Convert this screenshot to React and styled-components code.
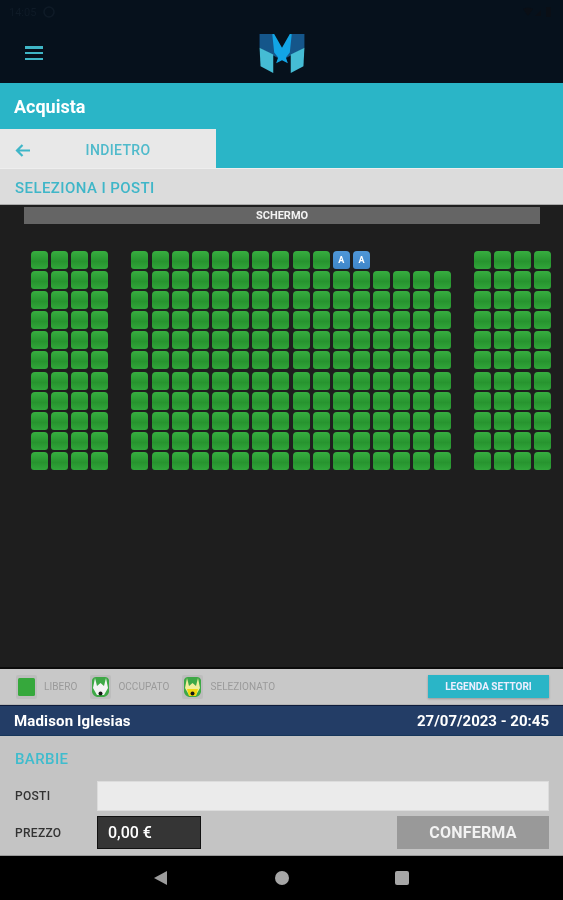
import React from "react";
import styled, { createGlobalStyle } from "styled-components";

const Global = createGlobalStyle`
  html, body { margin: 0; padding: 0; background: #000; }
  body { font-family: Roboto, "Liberation Sans", sans-serif; overflow: hidden; }
  * { box-sizing: border-box; }
`;

const Page = styled.div`
  width: 563px; height: 900px; display: flex; flex-direction: column; overflow: hidden;
  filter: blur(0.45px);
`;

const Header = styled.header`
  height: 83px; flex: none; background: #06111c; display: flex; flex-direction: column;
`;
const StatusBar = styled.div`
  height: 24px; flex: none; padding: 0 12px 0 9px; display: flex; align-items: center; justify-content: space-between;
  color: #0f1b27; font-size: 11px;
`;
const StatusGroup = styled.div`display: flex; align-items: center; gap: 7px;`;
const AppBar = styled.div`
  flex: 1; position: relative; display: flex; align-items: center; justify-content: center;
`;
const Menu = styled.div`
  position: absolute; left: 25px; top: 22px; width: 18px; height: 14px; display: flex; flex-direction: column; justify-content: space-between;
  & > i { display: block; height: 2.5px; background: #3fb6c6; }
`;
const Teal = styled.div`
  height: 85px; flex: none; background: #2ab5c7; display: flex; flex-direction: column; justify-content: space-between;
`;
const Title = styled.div`
  color: #fff; font-size: 18px; font-weight: 700; padding: 14px 0 0 14px; line-height: 20px;
`;
const BackTab = styled.div`
  width: 216px; height: 39px; background: #e8e8e8; position: relative; display: flex; align-items: center; justify-content: center;
  color: #4fbacb; font-size: 14px; font-weight: 500; letter-spacing: .35px; padding: 3px 0 0 20px;
  & > svg { position: absolute; left: 15px; top: 15px; }
`;
const Section = styled.div`
  height: 37px; flex: none; background: #dcdcdc; border-top: 1px solid #eee; border-bottom: 1px solid #aaa; padding: 2px 0 0 15px;
  display: flex; align-items: center; color: #3fb6c8; font-size: 15px; font-weight: 500; letter-spacing: .42px;
`;
const Hall = styled.main`
  flex: 1; min-height: 0; background: #1e1e1e; display: flex; flex-direction: column; border-bottom: 2px solid #0b0b0b;
`;
const Screen = styled.div`
  margin: 2px 23px 0 24px; height: 17px; flex: none; background: #656565; color: #f2f2f2; font-size: 11px; font-weight: 700;
  display: flex; align-items: center; justify-content: center;
`;
const SeatMap = styled.div`
  display: flex; padding: 27px 0 0 30.5px; gap: 23.5px;
`;
const Block = styled.div`
  display: grid; grid-template-columns: repeat(${p => p.$cols}, 17px); grid-auto-rows: 18px; column-gap: 3.15px; row-gap: 2.1px;
`;
const Seat = styled.div`
  border-radius: 4px 4px 3px 3px; display: flex; align-items: center; justify-content: center;
  background: ${p => p.$kind === "a"
    ? "linear-gradient(#4f97d8, #3f86c9)"
    : p.$kind === "none" ? "transparent" : "linear-gradient(#37ae40 0%, #27942f 58%, #31a63a 100%)"};
  color: #fff; font-size: 9px; font-weight: 700;
`;
const Legend = styled.div`
  height: 36px; flex: none; background: #c8c8c8; display: flex; align-items: center; padding: 0 14px 0 16px; border-bottom: 1px solid #b4b4b4;
`;
const LegendItem = styled.div`
  display: flex; align-items: center; gap: 7px; color: #9a9a9a; font-size: 10px; letter-spacing: .05px; margin-right: ${p => p.$gap}px;
`;
const LegendBtn = styled.div`
  margin-left: auto; width: 121px; height: 23px; background: #2ab5c7; color: #eef; font-size: 10px; font-weight: 700;
  display: flex; align-items: center; justify-content: center; box-shadow: 0 1px 2px rgba(0,0,0,.25);
`;
const Info = styled.div`
  height: 31px; flex: none; background: #233d66; border-top: 1px solid #0d1b3a; border-bottom: 1px solid #16365a; color: #fff;
  font-size: 15px; font-weight: 700; display: flex; justify-content: space-between; align-items: center; padding: 0 14px;
`;
const Name = styled.span`letter-spacing: .15px;`;
const Form = styled.div`
  height: 120px; flex: none; background: #c4c4c4; padding: 14px 14px 0 15px; display: flex; flex-direction: column; border-bottom: 1px solid #999;
`;
const Film = styled.div`
  color: #3fbccd; font-size: 15px; font-weight: 500; line-height: 18px; letter-spacing: .4px;
`;
const Row = styled.div`
  display: flex; align-items: center; margin-top: ${p => p.$top}px; height: ${p => p.$h}px;
`;
const Label = styled.div`
  width: 82px; flex: none; color: #333; font-size: 12px; font-weight: 500; letter-spacing: .3px;
`;
const Input = styled.div`
  flex: 1; height: 100%; background: #ebebeb; border: 1px solid #dcdcdc;
`;
const Price = styled.div`
  width: 104px; height: 100%; background: #353535; border: 1px solid #111; color: #fff; font-size: 16px; font-weight: 500;
  display: flex; align-items: center; padding-left: 10px;
`;
const Confirm = styled.div`
  margin-left: auto; width: 152px; height: 100%; background: #999; color: #f2f2f2; font-size: 16px; font-weight: 700; letter-spacing: .2px;
  display: flex; align-items: center; justify-content: center;
`;
const Nav = styled.nav`
  height: 44px; flex: none; background: #000; display: flex; align-items: center; padding-left: 153px;
  & > svg { display: block; }
`;
const NavIcon = styled.svg`
  margin-left: ${p => p.$left}px;
`;

const cells = (cols, rows, fn) => Array.from({ length: rows * cols }, (_, i) => fn(Math.floor(i / cols), i % cols, i));

const SideBlock = () => <Block $cols={4}>{cells(4, 11, (r, c, i) => <Seat key={i} />)}</Block>;
const MainBlock = () => (
  <Block $cols={16}>
    {cells(16, 11, (r, c, i) => {
      if (r === 0 && c > 11) return <Seat key={i} $kind="none" />;
      if (r === 0 && c > 9) return <Seat key={i} $kind="a">A</Seat>;
      return <Seat key={i} />;
    })}
  </Block>
);

const Logo = () => (
  <svg width="46" height="39" viewBox="0 0 46 40">
    <path d="M0 0H13L23 15L33 0H46V14L32 22L23 27L14 22L0 14Z" fill="#15568a" />
    <path d="M0 14L14 21V40L1 33Z" fill="#45bcd4" />
    <path d="M46 14L32 21V40L45 33Z" fill="#45bcd4" />
    <path d="M13 0H15L23 14L31 0H33L31 19L27 24L29 30L23 27L17 30L19 24L15 19Z" fill="#12a5e6" />
  </svg>
);

const LegendSeat = ({ kind }) => (
  <svg width="21" height="24" viewBox="0 0 21 24">
    <rect x="0" y="0" width="21" height="24" rx="2" fill="#bdbdbd" />
    {kind === "free" ? (
      <rect x="2" y="3" width="17" height="18" rx="1.5" fill="#36a83c" />
    ) : (
      <>
        <path d="M2 5Q3 2 6 2H15Q18 2 19 5V17Q18 21 14 22H7Q3 21 2 17Z" fill="#3ea846" />
        <path d="M5 3L7 11L10.5 8L14 11L16 3L18 13L14 20H7L3 13Z" fill={kind === "sel" ? "#f2ee9a" : "#f4f4f4"} />
        {kind === "sel" && <path d="M5 14H16L14 21H7Z" fill="#f1d80f" />}
        <circle cx="10.5" cy="18.5" r="2" fill="#161616" />
      </>
    )}
  </svg>
);

export default function App() {
  return (
    <Page>
      <Global />
      <Header>
        <StatusBar>
          <StatusGroup><span>14:05</span>
            <svg width="12" height="12" viewBox="0 0 12 12"><circle cx="6" cy="6" r="5" fill="none" stroke="#0f1b27" strokeWidth="1.6" /></svg>
          </StatusGroup>
          <StatusGroup>
            <svg width="28" height="12" viewBox="0 0 28 12" fill="#0a0f16">
              <path d="M0 3Q5 0 10 3L5 10Z" />
              <path d="M12 10L18 4V10Z" />
              <rect x="23" y="1" width="5" height="10" rx="1" />
            </svg>
          </StatusGroup>
        </StatusBar>
        <AppBar>
          <Menu><i /><i /><i /></Menu>
          <Logo />
        </AppBar>
      </Header>
      <Teal>
        <Title>Acquista</Title>
        <BackTab>
          <svg width="15" height="13" viewBox="0 0 15 13" fill="none" stroke="#3fb6c8" strokeWidth="2.2">
            <path d="M15 6.5H2M7.5 1L2 6.5L7.5 12" />
          </svg>
          INDIETRO
        </BackTab>
      </Teal>
      <Section>SELEZIONA I POSTI</Section>
      <Hall>
        <Screen>SCHERMO</Screen>
        <SeatMap>
          <SideBlock />
          <MainBlock />
          <SideBlock />
        </SeatMap>
      </Hall>
      <Legend>
        <LegendItem $gap={13}><LegendSeat kind="free" />LIBERO</LegendItem>
        <LegendItem $gap={13}><LegendSeat kind="occ" />OCCUPATO</LegendItem>
        <LegendItem $gap={0}><LegendSeat kind="sel" />SELEZIONATO</LegendItem>
        <LegendBtn>LEGENDA SETTORI</LegendBtn>
      </Legend>
      <Info><Name>Madison Iglesias</Name><span>27/07/2023 - 20:45</span></Info>
      <Form>
        <Film>BARBIE</Film>
        <Row $top={13} $h={30}><Label>POSTI</Label><Input /></Row>
        <Row $top={5} $h={33}><Label>PREZZO</Label><Price>0,00 €</Price><Confirm>CONFERMA</Confirm></Row>
      </Form>
      <Nav>
        <svg width="15" height="16" viewBox="0 0 15 16"><path d="M14 1V15L1 8Z" fill="#9c9c9c" /></svg>
        <NavIcon $left={106} width="16" height="16" viewBox="0 0 16 16"><circle cx="8" cy="8" r="7" fill="#a6a6a6" /></NavIcon>
        <NavIcon $left={104} width="16" height="16" viewBox="0 0 16 16"><rect x="1" y="1" width="14" height="14" rx="2" fill="#a6a6a6" /></NavIcon>
      </Nav>
    </Page>
  );
}
